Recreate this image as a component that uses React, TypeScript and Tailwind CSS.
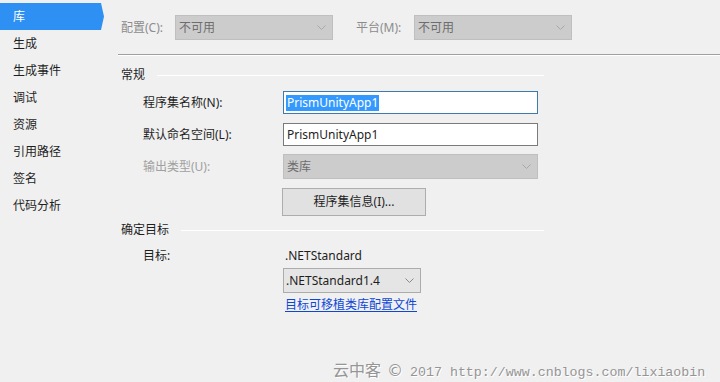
const font = "[font-family:'Noto_Sans','Noto_Sans_CJK_SC',sans-serif]";

function Chevron({ color = "#a0a0a0" }: { color?: string }) {
  return (
    <svg width="9" height="5" viewBox="0 0 9 5" className="shrink-0">
      <path d="M0.5 0.5 L4.5 4.5 L8.5 0.5" fill="none" stroke={color} strokeWidth="1" />
    </svg>
  );
}

function DisabledSelect({ text, width }: { text: string; width: string }) {
  return (
    <div className={`${width} h-[25px] flex items-center justify-between bg-[#cccccc] border border-[#bfbfbf] pl-[3px] pr-[6px] text-[#6d6d6d]`}>
      <span>{text}</span>
      <Chevron color="#a8a8a8" />
    </div>
  );
}

function SectionHeader({ title }: { title: string }) {
  return (
    <div className="flex items-center h-[16px] w-[423px]">
      <span className="text-[#1e1e1e]">{title}</span>
      <div className="flex-1 ml-[12px] h-px bg-[#a0a0a0] border-b border-white" />
    </div>
  );
}

const navItems = ["生成", "生成事件", "调试", "资源", "引用路径", "签名", "代码分析"];

export default function App() {
  return (
    <div className={`relative w-[720px] h-[382px] overflow-hidden bg-[#f0f0f0] text-[12px] leading-none ${font}`}>
      <div className="flex h-full">
        {/* sidebar */}
        <div className="w-[100px] pt-[3px] shrink-0">
          <div className="w-[104px] h-[27px] flex items-center pl-[13px] bg-[#2f90f4] text-white [clip-path:polygon(0_0,101px_0,104px_50%,101px_100%,0_100%)]">
            库
          </div>
          {navItems.map((n) => (
            <div key={n} className="h-[27px] flex items-center pl-[13px] text-[#1e1e1e]">
              {n}
            </div>
          ))}
        </div>

        {/* main */}
        <div className="flex-1 pl-[21px] flex flex-col">
          <div className="mt-[15px] h-[25px] flex items-center">
            <span className="w-[54px] text-[#8c8c8c]">配置(C):</span>
            <DisabledSelect text="不可用" width="w-[158px]" />
            <span className="ml-[23px] w-[58px] text-[#8c8c8c]">平台(M):</span>
            <DisabledSelect text="不可用" width="w-[158px]" />
          </div>

          <div className="mt-[14px] -ml-[3px] h-[2px] bg-[#a0a0a0] border-b border-white" />

          <div className="mt-[11px]">
            <SectionHeader title="常规" />
          </div>

          <div className="pl-[22px] flex flex-col">
            <div className="mt-[8px] flex items-center">
              <span className="w-[140px] text-[#1e1e1e]">程序集名称(N):</span>
              <div className="w-[255px] h-[23px] flex items-center border border-[#3d7bad] bg-white pl-[2px]">
                <span className="bg-[#3399ff] text-white px-px py-[2px]">PrismUnityApp1</span>
              </div>
            </div>
            <div className="mt-[9px] flex items-center">
              <span className="w-[140px] text-[#1e1e1e]">默认命名空间(L):</span>
              <div className="w-[255px] h-[23px] flex items-center border border-[#7a7a7a] bg-white pl-[3px] text-[#1e1e1e]">
                PrismUnityApp1
              </div>
            </div>
            <div className="mt-[8px] flex items-center">
              <span className="w-[140px] text-[#a0a0a0]">输出类型(U):</span>
              <DisabledSelect text="类库" width="w-[255px]" />
            </div>
            <div className="mt-[9px] pl-[139px]">
              <div className="w-[144px] h-[28px] flex items-center justify-center bg-[#e1e1e1] border border-[#adadad] text-[#1e1e1e]">
                程序集信息(I)...
              </div>
            </div>
          </div>

          <div className="mt-[6px]">
            <SectionHeader title="确定目标" />
          </div>

          <div className="pl-[22px] flex flex-col">
            <div className="mt-[10px] h-[16px] flex items-center">
              <span className="w-[142px] text-[#1e1e1e]">目标:</span>
              <span className="text-[#1e1e1e]">.NETStandard</span>
            </div>
            <div className="mt-[4px] pl-[140px]">
              <div className="w-[138px] h-[25px] flex items-center justify-between bg-[#e5e5e5] border border-[#acacac] pl-[2px] pr-[6px] text-[#1e1e1e]">
                <span>.NETStandard1.4</span>
                <Chevron color="#8a8a8a" />
              </div>
            </div>
            <div className="mt-[4px] h-[16px] pl-[142px] flex items-center">
              <span className="text-[#0d47d6] underline underline-offset-2">目标可移植类库配置文件</span>
            </div>
          </div>
        </div>
      </div>

      {/* watermark */}
      <div className="absolute left-[333px] top-[361px] flex items-baseline text-[#959595] [text-shadow:1px_1px_0_#ffffff] leading-none">
        <span className="text-[16px] [font-family:'Noto_Sans_CJK_SC',sans-serif]">云中客</span>
        <span className="ml-[6px] text-[16px] [font-family:'DejaVu_Sans',sans-serif]">©</span>
        <span className="ml-[7px] text-[13.3px] [font-family:'Liberation_Mono',monospace] whitespace-pre">2017 http://www.cnblogs.com/lixiaobin</span>
      </div>
    </div>
  );
}
